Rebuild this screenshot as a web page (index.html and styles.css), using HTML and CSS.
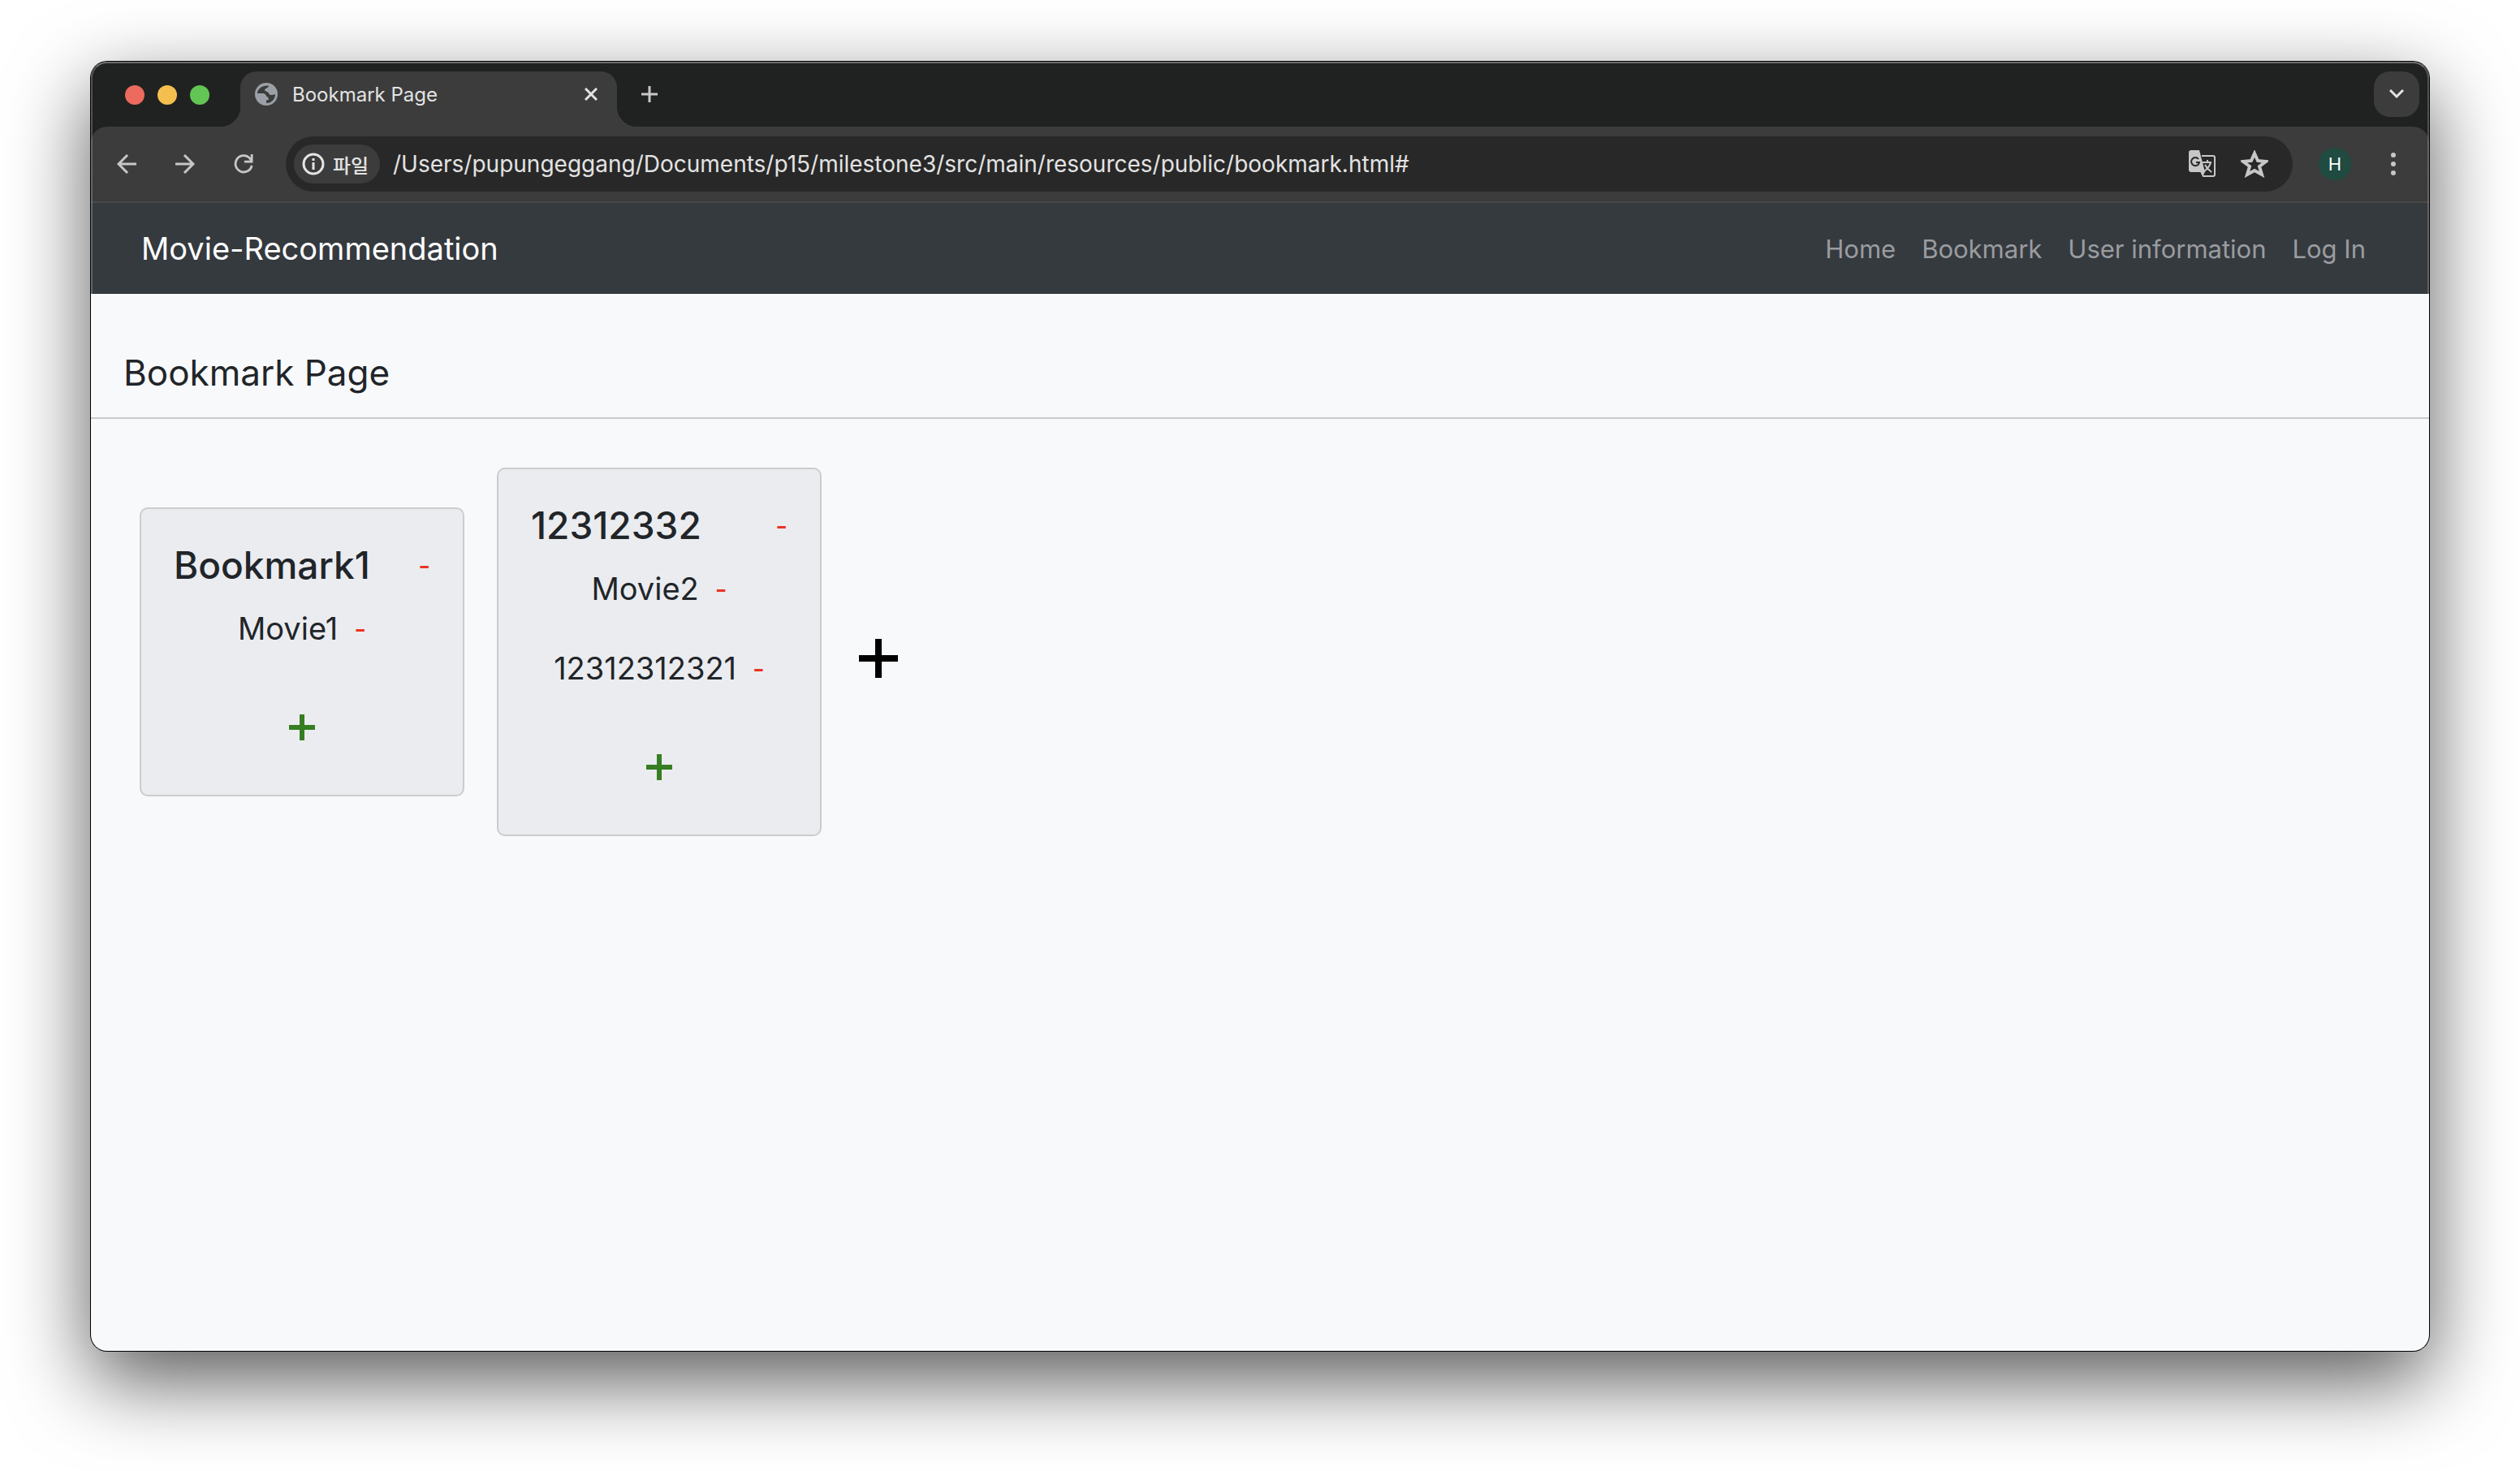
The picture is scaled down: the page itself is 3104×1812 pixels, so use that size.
FILE: index.html
```html
<!DOCTYPE html>
<html lang="en">
<head>
<meta charset="utf-8">
<title>Bookmark Page</title>
<link rel="stylesheet" href="styles.css">
</head>
<body>
<div class="window">
  <div class="tab-strip">
    <div class="lights"><span class="light red"></span><span class="light yellow"></span><span class="light green"></span></div>
    <div class="tab">
      <svg class="globe" viewBox="0 0 28 28" aria-hidden="true"><circle cx="14" cy="14" r="14" fill="#9aa0a6"/><path d="M3 13C3 8 8 3 17 3.500c0 3-5 3-5 5.500 0 2 4 1 5 4 1 2 3 3 8 1 0 6-4 11-11 11v-3l1-1h2c0-1 0-2-2-4-2-1-1-3-4-4z" fill="#3c3c3c"/></svg>
      <span class="tab-title">Bookmark Page</span>
      <button class="icon-button tab-close" aria-label="Close tab"><svg width="16" height="16" viewBox="0 0 16 16"><path d="M1 1l14 14M15 1L1 15" stroke="#e3e3e3" stroke-width="3"/></svg></button>
    </div>
    <button class="icon-button new-tab" aria-label="New tab"><svg width="20" height="20" viewBox="0 0 20 20"><path d="M10 0v20M0 10h20" stroke="#c7c7c7" stroke-width="3"/></svg></button>
    <button class="icon-button tab-search" aria-label="Search tabs"><svg width="18" height="12" viewBox="0 0 18 12"><path d="M1 1l8 8 8-8" fill="none" stroke="#e3e3e3" stroke-width="3"/></svg></button>
  </div>
  <div class="toolbar">
    <button class="icon-button" aria-label="Back"><svg width="24" height="24" viewBox="0 0 24 24"><path d="M24 12H2M13 1L2 12l11 11" fill="none" stroke="#c7c7c7" stroke-width="3"/></svg></button>
    <button class="icon-button" aria-label="Forward"><svg width="24" height="24" viewBox="0 0 24 24"><path d="M0 12h22M11 1l11 11-11 11" fill="none" stroke="#c7c7c7" stroke-width="3"/></svg></button>
    <button class="icon-button reload" aria-label="Reload"><svg width="26" height="26" viewBox="0 0 26 26"><path d="M24 15a11 11 0 1 1-3-10l3 4M24 0v10H14" fill="none" stroke="#c7c7c7" stroke-width="3"/></svg></button>
    <div class="address">
      <span class="chip"><svg width="28" height="28" viewBox="0 0 28 28" aria-hidden="true"><circle cx="14" cy="14" r="12" fill="none" stroke="#e3e3e3" stroke-width="3"/><path d="M14 12v9M14 7v3" stroke="#e3e3e3" stroke-width="3"/></svg>파일</span>
      <input class="url" aria-label="Address" value="/Users/pupungeggang/Documents/p15/milestone3/src/main/resources/public/bookmark.html#">
      <button class="icon-button" aria-label="Translate"><svg width="34" height="34" viewBox="0 0 34 34"><path d="M16 7h14a2 2 0 0 1 2 2v21a2 2 0 0 1-2 2H18l-3-6" fill="none" stroke="#c7c7c7" stroke-width="2"/><path d="M3 0h10l7 27H3a3 3 0 0 1-3-3V3a3 3 0 0 1 3-3z" fill="#c7c7c7"/><path d="M15 27h5l-3 5z" fill="#c7c7c7"/><path d="M12 11a5 5 0 1 0 1 4H9" fill="none" stroke="#282828" stroke-width="2"/><path d="M17 15h11M23 12v3M27 15c-1 5-4 8-8 11M20 18c2 4 4 6 8 9" fill="none" stroke="#c7c7c7" stroke-width="2"/></svg></button>
      <button class="icon-button" aria-label="Bookmark this page"><svg width="34" height="34" viewBox="0 0 34 34"><path d="M17 4l4 9 10 1-8 6 3 10-9-5-9 5 3-10-8-6 10-1z" fill="none" stroke="#c7c7c7" stroke-width="4"/></svg></button>
    </div>
    <button class="avatar" aria-label="Profile">H</button>
    <button class="icon-button" aria-label="Menu"><svg width="8" height="28" viewBox="0 0 8 28"><g fill="#c7c7c7"><circle cx="4" cy="3" r="3"/><circle cx="4" cy="14" r="3"/><circle cx="4" cy="25" r="3"/></g></svg></button>
  </div>
  <nav class="navbar">
    <a class="brand" href="#">Movie-Recommendation</a>
    <div class="links"><a href="#">Home</a><a href="#">Bookmark</a><a href="#">User information</a><a href="#">Log In</a></div>
  </nav>
  <main class="page">
    <h1>Bookmark Page</h1>
    <div class="board">
      <section class="card">
        <header><h2>Bookmark1</h2><button class="remove">-</button></header>
        <ul><li>Movie1<button class="remove">-</button></li></ul>
        <button class="add" aria-label="Add movie"><svg width="34" height="34" viewBox="0 0 34 34"><path d="M17 1v32M1 17h32" stroke="#367e21" stroke-width="6"/></svg></button>
      </section>
      <section class="card">
        <header><h2>12312332</h2><button class="remove">-</button></header>
        <ul><li>Movie2<button class="remove">-</button></li><li>12312312321<button class="remove">-</button></li></ul>
        <button class="add" aria-label="Add movie"><svg width="34" height="34" viewBox="0 0 34 34"><path d="M17 1v32M1 17h32" stroke="#367e21" stroke-width="6"/></svg></button>
      </section>
      <button class="add-list" aria-label="Add bookmark list"><svg width="48" height="48" viewBox="0 0 48 48"><path d="M24 0v48M0 24h48" stroke="#000" stroke-width="8"/></svg></button>
    </div>
  </main>
</div>
</body>
</html>
```
FILE: styles.css
```css
* { box-sizing: border-box; }
body {
  margin: 0;
  min-height: 100vh;
  padding: 76px 112px 148px;
  display: flex;
  background: #fff;
  font-family: Inter, "Noto Sans CJK KR", sans-serif;
  color: #212529;
}
button { border: 0; padding: 0; background: none; font: inherit; }
a { text-decoration: none; }
svg { display: block; }

.window {
  flex: 1;
  display: flex;
  flex-direction: column;
  position: relative;
  border-radius: 20px;
  overflow: hidden;
  background: #f8f9fb;
  box-shadow: 0 0 0 1px #000, 0 36px 100px rgba(0, 0, 0, .66);
}
/* light rim along the dark chrome */
.window::after {
  content: "";
  position: absolute;
  z-index: 2;
  inset: 0 0 auto;
  height: 286px;
  border: 2px solid rgba(255, 255, 255, .22);
  border-top-color: rgba(255, 255, 255, .34);
  border-bottom: 0;
  border-radius: 20px 20px 0 0;
  pointer-events: none;
}

.icon-button { display: flex; align-items: center; justify-content: center; flex: none; }

.tab-strip {
  position: relative;
  z-index: 1;
  height: 80px;
  padding: 12px 12px 0 42px;
  display: flex;
  background: #202221;
}
.lights { display: flex; gap: 16px; padding-top: 17px; margin-right: 38px; }
.light { width: 24px; height: 24px; border-radius: 50%; }
.red { background: #ed6a5e; }
.yellow { background: #f5bf4f; }
.green { background: #62c554; }

.tab {
  position: relative;
  width: 464px;
  height: 68px;
  padding: 0 24px 12px 18px;
  display: flex;
  align-items: center;
  background: #3c3c3c;
  border-radius: 20px 20px 0 0;
  font-size: 24px;
  color: #e3e3e3;
}
.tab::before, .tab::after {
  content: "";
  position: absolute;
  bottom: 0;
  width: 24px;
  height: 24px;
}
.tab::before { right: 100%; background: radial-gradient(circle at 0 0, transparent 24px, #3c3c3c 24px); }
.tab::after { left: 100%; background: radial-gradient(circle at 100% 0, transparent 24px, #3c3c3c 24px); }
.globe { width: 28px; height: 28px; margin-right: 18px; }
.tab-title { flex: 1; }
.new-tab { width: 80px; height: 56px; }
.tab-search { width: 56px; height: 56px; margin-left: auto; border-radius: 20px; background: #3c3c3c; }

.toolbar {
  height: 94px;
  padding: 12px 40px 12px 32px;
  display: flex;
  align-items: center;
  border-bottom: 2px solid #474747;
  background: #3c3c3c;
  border-radius: 20px 20px 0 0;
  box-shadow: 0 -20px 0 #202221;
}
.toolbar > .icon-button { width: 24px; margin-right: 48px; }
.toolbar > .reload { margin-right: 40px; }
.toolbar > .icon-button:last-child { margin: 0; width: 8px; }
.address {
  flex: 1;
  height: 68px;
  padding: 0 30px 0 10px;
  display: flex;
  align-items: center;
  gap: 30px;
  border-radius: 34px;
  background: #282828;
}
.chip {
  height: 48px;
  width: 106px;
  padding-left: 10px;
  display: flex;
  align-items: center;
  gap: 10px;
  border-radius: 24px;
  background: #3c3c3c;
  font-size: 24px;
  font-weight: 500;
  color: #e3e3e3;
  white-space: nowrap;
}
.url {
  flex: 1;
  min-width: 0;
  margin-left: -14px;
  padding: 0;
  border: 0;
  background: none;
  font: 28px Inter, sans-serif;
  color: #e3e3e3;
}
.avatar {
  width: 40px;
  height: 40px;
  margin: 0 48px 0 32px;
  border-radius: 50%;
  background: #1f4b40;
  color: #fff;
  font-size: 22px;
}

.navbar {
  height: 112px;
  padding: 0 78px 0 62px;
  display: flex;
  align-items: center;
  justify-content: space-between;
  background: #353a3f;
}
.brand { font-size: 38px; color: #fff; }
.links { display: flex; gap: 32px; font-size: 31px; }
.links a { color: #9a9c9f; }

h1, h2, ul { margin: 0; padding: 0; font-weight: 400; }
h1 {
  padding: 68px 40px 26px;
  border-bottom: 2px solid #c9cacc;
  font-size: 44px;
  line-height: 58px;
}
.board { display: flex; align-items: center; gap: 40px; padding: 60px; }
.card {
  width: 400px;
  padding: 40px 40px 66px;
  border: 2px solid #ccc;
  border-radius: 10px;
  background: #ebecf0;
}
.card header { display: flex; align-items: center; justify-content: space-between; }
h2 { font-size: 46px; line-height: 58px; font-weight: 500; }
.remove { color: #eb3323; font-size: 32px; font-weight: 500; }
ul { list-style: none; font-size: 38px; }
li { display: flex; justify-content: center; align-items: center; gap: 20px; height: 98px; }
.add { display: flex; margin: 56px auto 0; }
.add-list { margin: 16px 0 0 6px; }
```
